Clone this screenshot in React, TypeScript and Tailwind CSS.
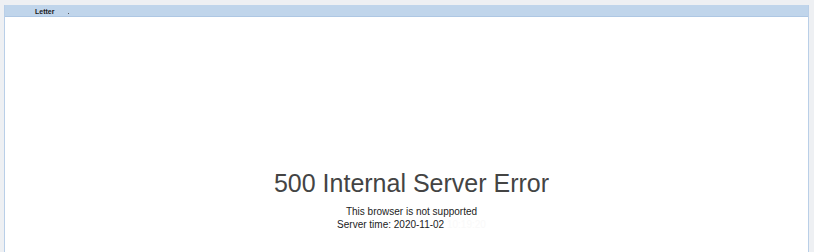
export default function App() {
  return (
    <div className="w-[814px] h-[252px] bg-[#eef0f3] pl-[4px] pt-[5px] pr-[5px] overflow-hidden font-['Liberation_Sans',Arial,sans-serif]">
      <div className="h-full flex flex-col bg-white border-l border-r border-[#b9cfe8]">
        {/* Header bar */}
        <div className="h-[12px] bg-[#c0d5eb] border-b border-[#aec7e3] flex items-center pl-[30px] gap-[14px]">
          <span className="mt-[1px] text-[7px] leading-none font-bold text-[#1a1a1a]">Letter</span>
          <span className="mt-[6px] w-[1px] h-[1px] bg-[#555]" />
        </div>

        {/* Error message */}
        <div className="flex-1 flex flex-col items-center pl-[10px] pt-[151px] text-[#444]">
          <h1 className="text-[25px] leading-[30px] font-normal">500 Internal Server Error</h1>
          <p className="mt-[8px] text-[10px] leading-[12px] text-[#222]">This browser is not supported</p>
          <p className="mt-[1px] text-[10px] leading-[12px] text-[#222]">
            Server time: 2020-11-02 <span className="text-[#f9f9f9]">10:19:20</span>
          </p>
        </div>
      </div>
    </div>
  );
}
